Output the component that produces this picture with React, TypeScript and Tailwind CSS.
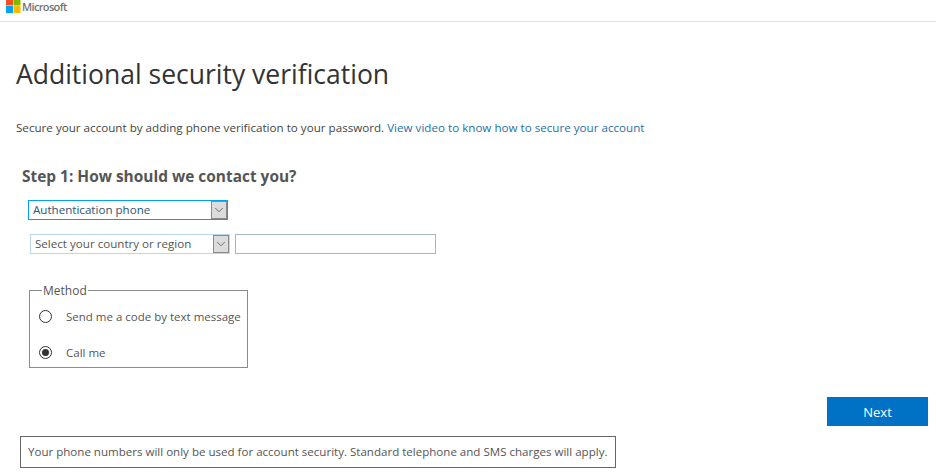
import { ChevronDown } from 'lucide-react';

const SelectBox = ({ label, className, textClass }: { label: string; className: string; textClass: string }) => (
    <div className={`flex items-center justify-between h-5 w-[200px] bg-white border ${className}`}>
        <span className={`pl-1 text-[11.6px] leading-none ${textClass}`}>{label}</span>
        <span className="flex items-center justify-center w-[16px] h-[18px] bg-[#dcdcdc] border border-[#8a8a8a] text-[#444]">
            <ChevronDown size={14} strokeWidth={1.25} />
        </span>
    </div>
);

const Radio = ({ label, checked }: { label: string; checked?: boolean }) => (
    <div className="flex items-center h-5">
        <span className="flex items-center justify-center w-[13px] h-[13px] ml-[12px] -mt-[2px] rounded-full border border-[#333] bg-white">
            {checked && <span className="w-[7px] h-[7px] rounded-full bg-[#333]" />}
        </span>
        <span className="ml-[14px] text-[11.5px] text-[#555]">{label}</span>
    </div>
);

export default function App() {
    return (
        <div className="w-[936px] h-[474px] bg-white overflow-hidden font-['Open_Sans','Noto_Sans',sans-serif] text-[#444]">
            {/* Microsoft bar */}
            <header className="flex items-start h-[22px] pl-[6px] border-b border-[#e0e0e0]">
                <svg width="15" height="14" viewBox="0 0 15 14" className="-mt-px">
                    <rect x="0" y="0" width="7" height="6.5" fill="#f25022" />
                    <rect x="7.5" y="0" width="7" height="6.5" fill="#7fba00" />
                    <rect x="0" y="7" width="7" height="7" fill="#00a4ef" />
                    <rect x="7.5" y="7" width="7" height="7" fill="#ffb900" />
                </svg>
                <span className="ml-[1px] text-[11px] leading-[14px] font-semibold tracking-[-0.65px] text-[#737373]">Microsoft</span>
            </header>

            <h1 className="mt-[33px] ml-[16px] text-[26.5px] leading-[38px] text-[#333]">Additional security verification</h1>

            <p className="mt-[27px] ml-[16px] text-[11.63px] leading-[16px] text-[#444]">
                Secure your account by adding phone verification to your password.{' '}
                <a className="text-[#1f6fa8]">View video to know how to secure your account</a>
            </p>

            <h2 className="mt-[30px] ml-[22px] text-[15.45px] leading-[20px] font-bold text-[#555]">Step 1: How should we contact you?</h2>

            <div className="mt-[14px] ml-[28px]">
                <SelectBox label="Authentication phone" className="border-[#00a2ed]" textClass="text-[#2f5573]" />
            </div>

            <div className="flex items-center gap-[5px] mt-[14px] ml-[30px]">
                <SelectBox label="Select your country or region" className="border-[#bcd7ec]" textClass="text-[#555]" />
                <input className="w-[201px] h-5 bg-white border border-[#a9b5bd]" />
            </div>

            <fieldset className="mt-[30px] ml-[29px] w-[219px] h-[84px] border border-[#8c8c8c]">
                <legend className="ml-[12px] px-[1px] text-[12px] leading-[13px] text-[#555]">Method</legend>
                <div className="flex flex-col gap-[16px] mt-[10px] ml-[-3px]">
                    <Radio label="Send me a code by text message" />
                    <Radio label="Call me" checked />
                </div>
            </fieldset>

            <div className="flex justify-end mt-[29px] pr-[8px]">
                <button className="w-[101px] h-[29px] pt-[2px] bg-[#0072c6] text-[13px] text-white">Next</button>
            </div>

            <div className="mt-[10px] ml-[20px] w-[596px] h-[32px] flex items-center pl-[7px] border border-[#666] text-[11.56px] text-[#555]">
                Your phone numbers will only be used for account security. Standard telephone and SMS charges will apply.
            </div>
        </div>
    );
}
